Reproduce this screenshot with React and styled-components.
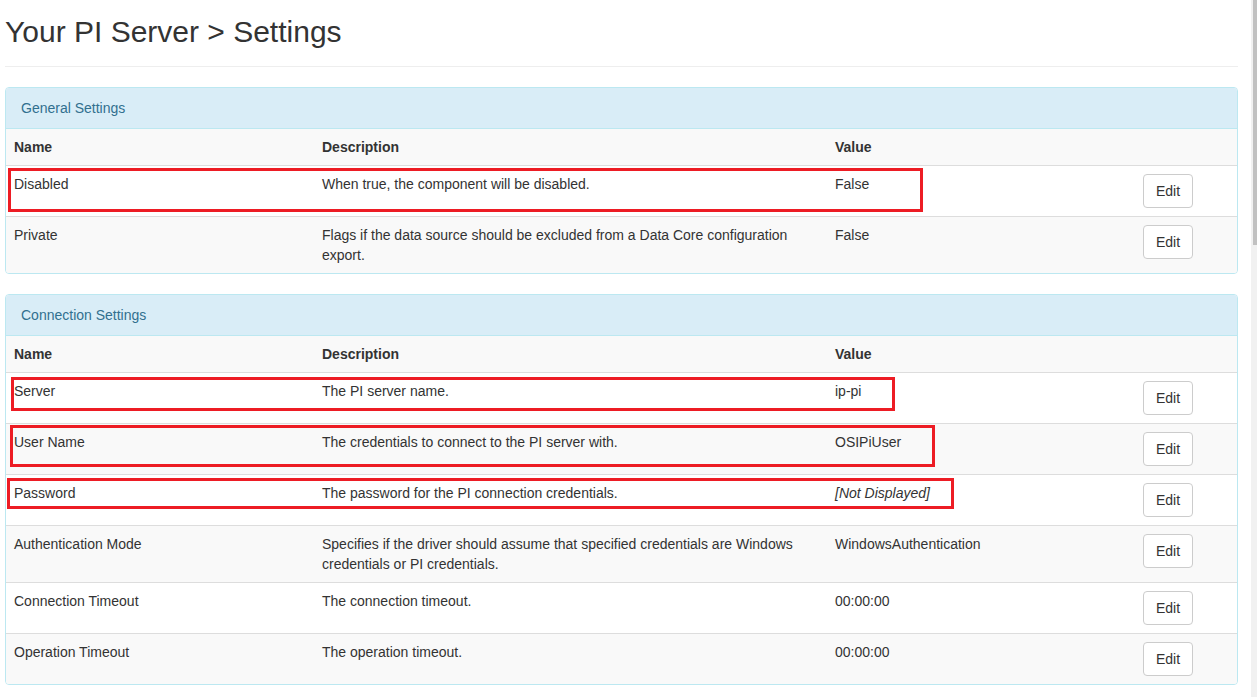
import styled, { createGlobalStyle } from "styled-components"

const GlobalStyle = createGlobalStyle`
    html, body {
        margin: 0;
        padding: 0;
        background: #fff;
        overflow: hidden;
    }
    body {
        font-family: "Liberation Sans", Arial, Helvetica, sans-serif;
        font-size: 14px;
        line-height: 20px;
        color: #333;
    }
    * { box-sizing: border-box; }
`

const Page = styled.div`
    padding: 0 19px 0 5px;
`

const Title = styled.h1`
    margin: 15px 0 20px;
    padding-bottom: 18px;
    border-bottom: 1px solid #eee;
    font-size: 30px;
    font-weight: 400;
    line-height: 33px;
    color: #333;
`

const Panel = styled.section`
    margin-bottom: 20px;
    border: 1px solid #bce8f1;
    border-radius: 4px;
    background: #fff;
    overflow: hidden;
`

const PanelHeading = styled.div`
    padding: 10px 15px;
    background: #d9edf7;
    color: #31708f;
    border-bottom: 1px solid #bce8f1;
`

const Row = styled.div`
    position: relative;
    display: grid;
    grid-template-columns: 308px 513px 308px 1fr;
    background: ${p => (p.$striped ? "#f9f9f9" : "#fff")};
    border-top: ${p => (p.$first ? "none" : "1px solid #ddd")};
    font-weight: ${p => (p.$head ? 700 : 400)};
`

const Cell = styled.div`
    padding: 8px;
    font-style: ${p => (p.$italic ? "italic" : "normal")};
`

const EditButton = styled.button`
    height: 34px;
    padding: 6px 12px;
    border: 1px solid #ccc;
    border-radius: 4px;
    background: #fff;
    color: #333;
    font-family: inherit;
    font-size: 14px;
    line-height: 20px;
    cursor: pointer;
`

const Highlight = styled.div`
    position: absolute;
    border: 3px solid #ed1c24;
    pointer-events: none;
`

const ScrollTrack = styled.div`
    position: fixed;
    top: 0;
    right: 0;
    width: 6px;
    height: 100vh;
    background: #f1f1f1;
`

const ScrollThumb = styled.div`
    margin-left: 2px;
    width: 4px;
    height: 245px;
    background: #c1c1c1;
`

const general = [
    { name: "Disabled", desc: "When true, the component will be disabled.", value: "False", box: { left: 2, top: 2, width: 915, height: 44 } },
    { name: "Private", desc: "Flags if the data source should be excluded from a Data Core configuration export.", value: "False" },
]

const connection = [
    { name: "Server", desc: "The PI server name.", value: "ip-pi", box: { left: 5, top: 4, width: 884, height: 34 } },
    { name: "User Name", desc: "The credentials to connect to the PI server with.", value: "OSIPiUser", box: { left: 4, top: 1, width: 925, height: 42 } },
    { name: "Password", desc: "The password for the PI connection credentials.", value: "[Not Displayed]", italic: true, box: { left: 1, top: 3, width: 947, height: 31 } },
    { name: "Authentication Mode", desc: "Specifies if the driver should assume that specified credentials are Windows credentials or PI credentials.", value: "WindowsAuthentication" },
    { name: "Connection Timeout", desc: "The connection timeout.", value: "00:00:00" },
    { name: "Operation Timeout", desc: "The operation timeout.", value: "00:00:00" },
]

function SettingsPanel({ title, rows }) {
    return (
        <Panel>
            <PanelHeading>{title}</PanelHeading>
            <Row $head $striped $first>
                <Cell>Name</Cell>
                <Cell>Description</Cell>
                <Cell>Value</Cell>
                <Cell></Cell>
            </Row>
            {rows.map((r, i) => (
                <Row key={r.name} $striped={i % 2 === 1}>
                    <Cell>{r.name}</Cell>
                    <Cell>{r.desc}</Cell>
                    <Cell $italic={r.italic}>{r.value}</Cell>
                    <Cell>
                        <EditButton>Edit</EditButton>
                    </Cell>
                    {r.box && <Highlight style={r.box} />}
                </Row>
            ))}
        </Panel>
    )
}

export default function App() {
    return (
        <>
            <GlobalStyle />
            <Page>
                <Title>Your PI Server &gt; Settings</Title>
                <SettingsPanel title="General Settings" rows={general} />
                <SettingsPanel title="Connection Settings" rows={connection} />
            </Page>
            <ScrollTrack>
                <ScrollThumb />
            </ScrollTrack>
        </>
    )
}
